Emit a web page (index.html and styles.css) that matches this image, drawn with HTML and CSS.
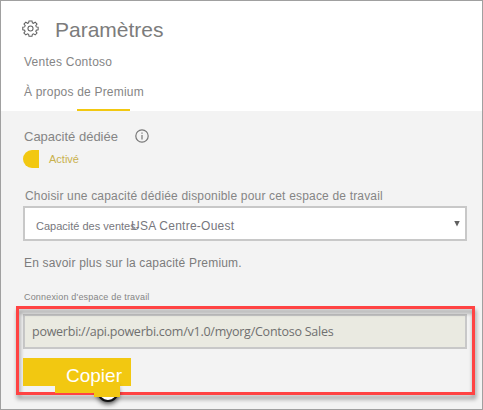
FILE: index.html
```html
<!DOCTYPE html>
<html lang="fr">
<head>
<meta charset="utf-8">
<title>Paramètres</title>
<link rel="stylesheet" href="styles.css">
</head>
<body>
<main class="panel">
  <header class="header">
    <div class="heading">
      <svg class="gear" viewBox="0 0 18 18"><path d="M7.4 1h3.2l.4 2 1.2.5L14 2.300l1.900 2L14.600 6l.5 1.300 2 .3v2.800l-2 .4-.5 1.300 1.300 1.700-1.900 2-1.800-1.200-1.200.5-.4 2H7.400l-.4-2-1.200-.5L4 15.800l-2-2 1.300-1.700-.5-1.300-2-.4V7.600l2-.3L3.400 6 2.100 4.300l1.900-2 1.800 1.200L7 3z"/><circle cx="9" cy="9" r="2.700"/></svg>
      <h1 class="title">Paramètres</h1>
    </div>
    <div class="workspace">Ventes Contoso</div>
    <nav class="tabs"><a class="tab">À propos de Premium</a></nav>
  </header>
  <section class="body">
    <div class="capacity"><span class="w-cap">Capacité dédiée</span>
      <svg class="info" viewBox="0 0 14 14"><circle cx="7" cy="7" r="6.200"/><path d="M7 6v4.500M7 3.500v1.200"/></svg>
    </div>
    <div class="switch"><span class="knob"></span><span class="state">Activé</span></div>
    <label class="choose">Choisir une capacité dédiée disponible pour cet espace de travail</label>
    <div class="select"><span class="option">Capacité des ventes-</span><span class="region">USA Centre-Ouest</span><span class="arrow"></span></div>
    <p class="learn">En savoir plus sur la capacité Premium.</p>
    <label class="connection">Connexion d'espace de travail</label>
    <div class="url">powerbi://api.powerbi.com/v1.0/myorg/Contoso Sales</div>
    <div class="frame"></div>
    <div class="copy"><span class="badge"></span><span class="copy-tab"></span><span class="copy-tip"></span><span class="copy-text">Copier</span></div>
  </section>
</main>
</body>
</html>
```
FILE: styles.css
```css
* { box-sizing: border-box; }
body { margin: 0; font: 12px "Liberation Sans", Arial, sans-serif; color: #858585; }
.panel { position: relative; width: 483px; height: 410px; border: 1px solid #a0a0a0; background: #f3f3f3; overflow: hidden; white-space: nowrap; }
.header { height: 110px; padding: 14px 22px 0 21px; background: #fff; }
.heading { display: flex; height: 30px; }
.gear { width: 17px; height: 17px; margin-top: 5px; fill: none; stroke: #606060; stroke-width: 1.1; }
.title { margin: 0 0 0 16px; font-size: 21px; line-height: 30px; font-weight: 400; color: #7c7c7c; }
.workspace { height: 34px; padding-left: 2px; line-height: 34px; letter-spacing: .25px; }
.tabs { position: relative; height: 32px; padding-left: 2px; line-height: 26px; letter-spacing: .2px; }
.tabs::after { content: ""; position: absolute; left: 55px; bottom: 0; width: 53px; height: 2px; background: #f2c811; }
.body { padding: 14px 15px 0 22px; }
.capacity { display: flex; align-items: center; height: 22px; padding-left: 1px; font-size: 13px; }
.w-cap { width: 111px; }
.info { width: 14px; height: 14px; fill: none; stroke: #777; stroke-width: 1.2; }
.switch { display: flex; align-items: center; height: 24px; }
.knob { width: 16px; height: 18px; border-radius: 9px 0 0 9px; background: #f2c811; }
.state { margin-left: 10px; font-size: 11px; color: #c9b14c; }
.choose { display: block; margin-top: 15px; height: 20px; padding-left: 2px; line-height: 20px; letter-spacing: .18px; }
.select { display: flex; align-items: center; height: 35px; border: 2px solid #c8c8c8; background: #fff; padding: 4px 4px 0 11px; color: #77777d; }
.option { width: 95px; font-size: 11px; }
.region { letter-spacing: .25px; }
.arrow { width: 6px; height: 6px; margin: -4px 1px 0 auto; background: #606060; clip-path: polygon(0 0, 100% 0, 50% 100%); }
.learn { margin: 12px 0 0; padding-left: 1px; line-height: 20px; letter-spacing: .18px; color: #7c7c7c; }
.connection { display: block; margin-top: 14px; height: 20px; padding-left: 1px; line-height: 20px; font-size: 9px; letter-spacing: .18px; }
.url { height: 35px; margin-top: 7px; border: 2px solid #c8c8c8; background: #eaeae1; padding-left: 7px; font: 12.5px/32px "Open Sans", "Noto Sans", sans-serif; letter-spacing: -.25px; color: #707070; }
.frame { position: absolute; left: 15px; top: 305px; width: 459px; height: 89px; border: 3px solid #ff4343; filter: drop-shadow(1px 4px 2px rgba(0,0,0,.4)); }
.copy { position: relative; width: 108px; height: 28px; margin-top: 9px; background: #f2c811; }
.badge { position: absolute; left: 74px; top: 22px; width: 22px; height: 22px; border: 2px solid #111; border-radius: 50%; background: #fff; box-shadow: 0 2px 5px rgba(0,0,0,.7); }
.copy-tab { position: absolute; left: 32px; top: 20px; width: 65px; height: 15px; background: #f2c811; }
.copy-tip { position: absolute; left: 71px; top: 20px; width: 26px; height: 19px; background: #f2c811; }
.copy-text { position: absolute; left: 43px; top: 7px; line-height: 22px; font-size: 19px; color: #fff; }
```
